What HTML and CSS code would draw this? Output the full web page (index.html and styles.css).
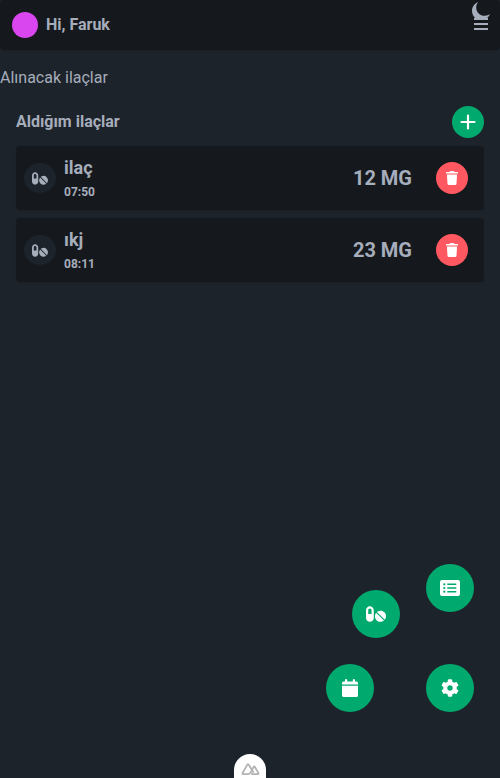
FILE: index.html
```html
<!DOCTYPE html>
<html lang="tr">
<head>
<meta charset="utf-8">
<meta name="viewport" content="width=device-width">
<title>İlaçlar</title>
<link rel="stylesheet" href="styles.css">
</head>
<body>
<svg class="symbols" aria-hidden="true">
  <symbol id="pills" viewBox="0 32 576 448"><path d="M112 32C50.1 32 0 82.1 0 144v224c0 61.9 50.1 112 112 112s112-50.1 112-112V144c0-61.9-50.1-112-112-112zm48 224H64V144c0-26.5 21.5-48 48-48s48 21.5 48 48v112zm139.7-29.7c-3.5-3.5-9.4-3.1-12.3.8-45.3 62.5-40.4 150.1 15.9 206.4 56.3 56.3 143.9 61.2 206.4 15.9 4-2.9 4.3-8.8.8-12.3L299.7 226.3zm229.8-19c-56.3-56.3-143.9-61.2-206.4-15.9-4 2.9-4.3 8.8-.8 12.3l210.8 210.8c3.5 3.5 9.4 3.1 12.3-.8 45.3-62.6 40.5-150.1-15.9-206.4z"/></symbol>
  <symbol id="trash" viewBox="0 0 12 14"><path d="M.5 1H3.4L4 .3Q4.2 0 4.6 0H7.4Q7.8 0 8 .3L8.6 1H11.5Q12 1 12 1.5V2.5H0V1.5Q0 1 .5 1ZM.9 3.5H11.1L10.5 12.7Q10.4 14 9.1 14H2.9Q1.6 14 1.5 12.7Z"/></symbol>
</svg>
<header class="navbar">
  <span class="avatar"></span>
  <span class="greeting">Hi, Faruk</span>
  <svg class="menu" viewBox="0 0 14 12"><path d="M0 0H14V2H0ZM0 5H14V7H0ZM0 10H14V12H0Z"/></svg>
  <svg class="moon" viewBox="0 0 18 18"><path d="M6.2 0C2.3 1.5 0 4.8 0 8.7C0 14 4 18 9.2 18C13.2 18 16.6 15.8 18 12.1C16.5 13.2 14.8 13.8 12.8 13.8C7.9 13.8 4.2 10.2 4.2 5.5C4.2 3.4 4.9 1.6 6.2 0Z"/></svg>
</header>
<main>
  <p class="upcoming">Alınacak ilaçlar</p>
  <section class="taken">
    <div class="heading">
      <h2>Aldığım ilaçlar</h2>
      <button class="btn add" aria-label="Ekle"><svg viewBox="0 0 16 16"><path d="M8 1.5V14.5M1.5 8H14.5"/></svg></button>
    </div>
    <article class="card">
      <span class="badge"><svg><use href="#pills"/></svg></span>
      <div class="info"><h3>ilaç</h3><time>07:50</time></div>
      <strong>12 MG</strong>
      <button class="btn delete" aria-label="Sil"><svg><use href="#trash"/></svg></button>
    </article>
    <article class="card">
      <span class="badge"><svg><use href="#pills"/></svg></span>
      <div class="info"><h3>ıkj</h3><time>08:11</time></div>
      <strong>23 MG</strong>
      <button class="btn delete" aria-label="Sil"><svg><use href="#trash"/></svg></button>
    </article>
  </section>
</main>
<nav class="dial">
  <button class="fab list" aria-label="Liste"><svg viewBox="0 0 20 16"><path fill-rule="evenodd" d="M2 0H18Q20 0 20 2V14Q20 16 18 16H2Q0 16 0 14V2Q0 0 2 0ZM4.3 3.2A1.1 1.1 0 1 0 4.3 5.4A1.1 1.1 0 1 0 4.3 3.2ZM4.3 6.9A1.1 1.1 0 1 0 4.3 9.1A1.1 1.1 0 1 0 4.3 6.9ZM4.3 10.6A1.1 1.1 0 1 0 4.3 12.8A1.1 1.1 0 1 0 4.3 10.6ZM7.3 3.6H16.3V5H7.3ZM7.3 7.3H16.3V8.7H7.3ZM7.3 11H16.3V12.4H7.3Z"/></svg></button>
  <button class="fab medicine" aria-label="İlaçlar"><svg><use href="#pills"/></svg></button>
  <button class="fab calendar" aria-label="Takvim"><svg viewBox="0 0 16 18"><path d="M0 4Q0 2.4 1.6 2.4H3V.9Q3 0 4.1 0T5.2.9V2.4H10.8V.9Q10.8 0 11.9 0T13 .9V2.4H14.4Q16 2.4 16 4V5.6H0ZM0 6.8H16V16.4Q16 18 14.4 18H1.6Q0 18 0 16.4Z"/></svg></button>
  <button class="fab settings" aria-label="Ayarlar"><svg viewBox="0 0 512 512"><path d="M487.4 315.7l-42.6-24.6c4.3-23.2 4.3-47 0-70.2l42.6-24.6c4.9-2.8 7.1-8.6 5.5-14-11.1-35.6-30-67.8-54.7-94.6-3.8-4.1-10-5.1-14.8-2.3L380.8 110c-17.9-15.4-38.5-27.3-60.8-35.1V25.8c0-5.6-3.9-10.5-9.4-11.7-36.7-8.2-74.3-7.8-109.2 0-5.5 1.2-9.4 6.1-9.4 11.7V75c-22.2 7.9-42.8 19.8-60.8 35.1L88.7 85.5c-4.9-2.8-11-1.9-14.8 2.3-24.7 26.7-43.6 58.9-54.7 94.6-1.7 5.4.6 11.2 5.5 14L67.3 221c-4.3 23.2-4.3 47 0 70.2l-42.6 24.6c-4.9 2.8-7.1 8.6-5.5 14 11.1 35.6 30 67.8 54.7 94.6 3.8 4.1 10 5.1 14.8 2.3l42.6-24.6c17.9 15.4 38.5 27.3 60.8 35.1v49.2c0 5.6 3.9 10.5 9.4 11.7 36.7 8.2 74.3 7.8 109.2 0 5.5-1.2 9.4-6.1 9.4-11.7v-49.2c22.2-7.9 42.8-19.8 60.8-35.1l42.6 24.6c4.9 2.8 11 1.9 14.8-2.3 24.7-26.7 43.6-58.9 54.7-94.6 1.5-5.5-.7-11.3-5.6-14.1zM256 336c-44.1 0-80-35.9-80-80s35.9-80 80-80 80 35.9 80 80-35.9 80-80 80z"/></svg></button>
</nav>
<div class="devtools"><svg viewBox="0 0 20 13"><path d="M7 12H2Q.8 12 1.3 10.9L6.6 1.8Q7.3.7 8 1.8L10.2 5.6M10.6 12H18Q19.2 12 18.6 10.9L14.8 4.3Q14.1 3.2 13.4 4.3L9.7 10.9Q9 12 7 12M13.4 10.5L8.8 2.8"/></svg></div>
</body>
</html>
```

FILE: styles.css
```css
* { box-sizing: border-box; }
body {
  margin: 0;
  height: 778px;
  overflow: hidden;
  background: #1d232a;
  color: #a6adbb;
  font: 16px/24px Roboto, sans-serif;
}
svg { display: block; fill: currentColor; }
h2, h3, p { margin: 0; }
.symbols { position: absolute; width: 0; height: 0; }
.navbar {
  position: relative;
  display: flex;
  align-items: center;
  gap: 8px;
  height: 50px;
  padding: 0 12px;
  border-radius: 4px;
  background: #15191e;
  box-shadow: 0 1px 2px rgb(0 0 0 / 8%);
}
.avatar { width: 26px; height: 26px; border-radius: 50%; background: #d946ef; }
.greeting { font-weight: 700; }
.menu { width: 14px; height: 12px; margin: 0 0 2px auto; }
.moon { position: absolute; top: 2px; right: 10px; width: 18px; height: 18px; }
.upcoming { padding-top: 16px; }
.taken { display: flex; flex-direction: column; gap: 8px; padding: 16px; }
.heading { display: flex; align-items: center; justify-content: space-between; height: 32px; }
h2 { font-size: 16px; line-height: 24px; }
.btn, .fab {
  display: grid;
  place-items: center;
  padding: 0;
  border: 0;
  border-radius: 50%;
  color: #fff;
}
.btn { width: 32px; height: 32px; }
.add { background: #00a96e; }
.add svg { width: 16px; height: 16px; stroke: currentColor; stroke-width: 2.2; stroke-linecap: round; }
.card {
  display: flex;
  align-items: center;
  height: 64px;
  padding: 8px 16px 8px 8px;
  border-radius: 4px;
  background: #15191e;
  box-shadow: 0 1px 2px rgb(0 0 0 / 8%);
}
.badge { display: grid; place-items: center; width: 32px; height: 30px; border-radius: 50%; background: #1d232a; }
.badge svg { width: 16px; height: 13px; }
.info { flex: 1; margin-left: 8px; }
h3 { font-size: 18px; line-height: 28px; }
time { display: block; font-size: 12px; font-weight: 700; line-height: 20px; }
.card strong { margin-right: 24px; font-size: 20px; line-height: 28px; }
.delete { background: #ff5861; }
.delete svg { width: 12px; height: 14px; }
.dial { position: fixed; right: 26px; bottom: 66px; width: 148px; height: 148px; }
.fab { position: absolute; width: 48px; height: 48px; background: #00a96e; }
.list { top: 0; right: 0; }
.medicine { top: 26px; left: 26px; }
.calendar { bottom: 0; left: 0; }
.settings { right: 0; bottom: 0; }
.list svg { width: 20px; height: 16px; }
.medicine svg { width: 20px; height: 16px; }
.calendar svg { width: 16px; height: 18px; }
.settings svg { width: 18px; height: 18px; }
.devtools {
  position: fixed;
  bottom: 0;
  left: 234px;
  display: flex;
  justify-content: center;
  width: 32px;
  height: 24px;
  padding-top: 9px;
  border-radius: 16px 16px 0 0;
  background: #fff;
}
.devtools svg { width: 19px; height: 12px; fill: none; stroke: #b2b2b2; stroke-width: 1.9; }
```
